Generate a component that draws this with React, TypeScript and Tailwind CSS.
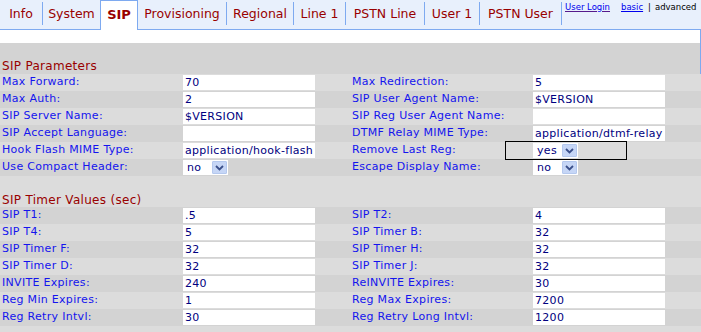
import React from "react";

type Tab = { label: string; width: number; active?: boolean };

const tabs: Tab[] = [
  { label: "Info", width: 42 },
  { label: "System", width: 58 },
  { label: "SIP", width: 38, active: true },
  { label: "Provisioning", width: 88 },
  { label: "Regional", width: 67 },
  { label: "Line 1", width: 52 },
  { label: "PSTN Line", width: 79 },
  { label: "User 1", width: 55 },
  { label: "PSTN User", width: 82 },
];

type Field = { label: string; value: string; select?: boolean };
type Row = [Field, Field];

const sipParams: Row[] = [
  [
    { label: "Max Forward:", value: "70" },
    { label: "Max Redirection:", value: "5" },
  ],
  [
    { label: "Max Auth:", value: "2" },
    { label: "SIP User Agent Name:", value: "$VERSION" },
  ],
  [
    { label: "SIP Server Name:", value: "$VERSION" },
    { label: "SIP Reg User Agent Name:", value: "" },
  ],
  [
    { label: "SIP Accept Language:", value: "" },
    { label: "DTMF Relay MIME Type:", value: "application/dtmf-relay" },
  ],
  [
    { label: "Hook Flash MIME Type:", value: "application/hook-flash" },
    { label: "Remove Last Reg:", value: "yes", select: true },
  ],
  [
    { label: "Use Compact Header:", value: "no", select: true },
    { label: "Escape Display Name:", value: "no", select: true },
  ],
];

const timerValues: Row[] = [
  [
    { label: "SIP T1:", value: ".5" },
    { label: "SIP T2:", value: "4" },
  ],
  [
    { label: "SIP T4:", value: "5" },
    { label: "SIP Timer B:", value: "32" },
  ],
  [
    { label: "SIP Timer F:", value: "32" },
    { label: "SIP Timer H:", value: "32" },
  ],
  [
    { label: "SIP Timer D:", value: "32" },
    { label: "SIP Timer J:", value: "32" },
  ],
  [
    { label: "INVITE Expires:", value: "240" },
    { label: "ReINVITE Expires:", value: "30" },
  ],
  [
    { label: "Reg Min Expires:", value: "1" },
    { label: "Reg Max Expires:", value: "7200" },
  ],
  [
    { label: "Reg Retry Intvl:", value: "30" },
    { label: "Reg Retry Long Intvl:", value: "1200" },
  ],
];

const Separator = () => (
  <div className="w-px shrink-0 border-b border-[#7eaaf0]">
    <div className="mt-[2px] h-[23px] w-px bg-[#7eaaf0]" />
  </div>
);

const SelectBox = ({ value }: { value: string }) => (
  <div className="relative mt-px h-[15px] w-[45px] bg-white pl-[4px] text-[11px] leading-[15px] tracking-[0.3px] text-[#000080]">
    {value}
    <div className="absolute right-[1px] top-[1px] flex h-[13px] w-[15px] items-center justify-center rounded-[1px] border border-[#b4c8ee] bg-[#c6d6f6]">
      <svg width="9" height="6" viewBox="0 0 9 6">
        <path d="M1 1 L4.5 4.5 L8 1" fill="none" stroke="#3a4f8a" strokeWidth="1.8" />
      </svg>
    </div>
  </div>
);

const FieldCells = ({ field }: { field: Field }) => (
  <>
    <div className="flex h-[17px] items-center whitespace-nowrap pl-[2px] text-[11px] tracking-[0.3px] text-[#1414ee]">
      {field.label}
    </div>
    <div className="h-[17px]">
      {field.select ? (
        <SelectBox value={field.value} />
      ) : (
        <div className="mt-px h-[15px] w-[132px] overflow-hidden whitespace-nowrap bg-white pl-[2px] text-[11px] leading-[15px] tracking-[0.3px] text-[#000080]">
          {field.value}
        </div>
      )}
    </div>
    <div className="h-[17px]" />
  </>
);

const Section = ({ rows, startLight }: { rows: Row[]; startLight: boolean }) => (
  <div>
    {rows.map((row, i) => {
      const light = startLight ? i % 2 === 0 : i % 2 === 1;
      return (
        <div
          key={i}
          className={`grid grid-cols-[183px_132px_35px_183px_132px_36px] ${
            light ? "bg-[#dcdcdc]" : "bg-[#d3d3d3]"
          }`}
        >
          <FieldCells field={row[0]} />
          <FieldCells field={row[1]} />
        </div>
      );
    })}
  </div>
);

export default function App() {
  return (
    <div
      className="relative h-[332px] w-[701px] overflow-hidden bg-white"
      style={{ fontFamily: '"DejaVu Sans", Verdana, sans-serif' }}
    >
      {/* tab bar */}
      <div className="flex h-[30px] bg-[#e8f0fc]">
        {tabs.map((t, i) => {
          const prevActive = i > 0 && tabs[i - 1].active;
          const showSep = i > 0 && !t.active && !prevActive;
          if (t.active) {
            return (
              <div
                key={t.label}
                className="flex shrink-0 items-start justify-center border-x border-t border-[#7eaaf0] bg-white pt-[4px] text-[13px] font-bold text-[#990000]"
                style={{ width: t.width }}
              >
                {t.label}
              </div>
            );
          }
          return (
            <React.Fragment key={t.label}>
              {showSep && <Separator />}
              <div
                className="flex shrink-0 items-center justify-center whitespace-nowrap border-b border-[#7eaaf0] pb-[1px] text-[12.5px] text-[#990000]"
                style={{ width: t.width - (showSep ? 1 : 0) }}
              >
                {t.label}
              </div>
            </React.Fragment>
          );
        })}
        <Separator />
        <div className="flex min-w-0 flex-1 items-start whitespace-nowrap border-b border-[#7eaaf0] pl-[3px] pt-[2px] text-[8.5px] leading-[11px]">
          <a className="text-[#0000ee] underline decoration-[#551a8b]">User Login</a>
          <a className="ml-[11px] text-[#0000ee] underline">basic</a>
          <span className="ml-[5px] text-black">|</span>
          <span className="ml-[4px] text-black">advanced</span>
        </div>
      </div>

      {/* content */}
      <div className="h-[13px] border-r border-[#7eaaf0]" />
      <div className="flex h-[31px] items-end border-r border-[#7eaaf0] bg-[#d3d3d3] pb-[1px] pl-[2px] text-[12px] leading-[14px] tracking-[0.3px] text-[#990000]">
        SIP Parameters
      </div>
      <Section rows={sipParams} startLight />
      <div className="flex h-[31px] items-end bg-[#dcdcdc] pl-[2px] text-[12px] leading-[14px] tracking-[0.3px] text-[#990000]">
        SIP Timer Values (sec)
      </div>
      <Section rows={timerValues} startLight={false} />
      <div className="h-[10px] bg-[#dcdcdc]" />

      {/* highlight box */}
      <div className="absolute left-[505px] top-[141px] h-[19px] w-[122px] border border-black" />
    </div>
  );
}
